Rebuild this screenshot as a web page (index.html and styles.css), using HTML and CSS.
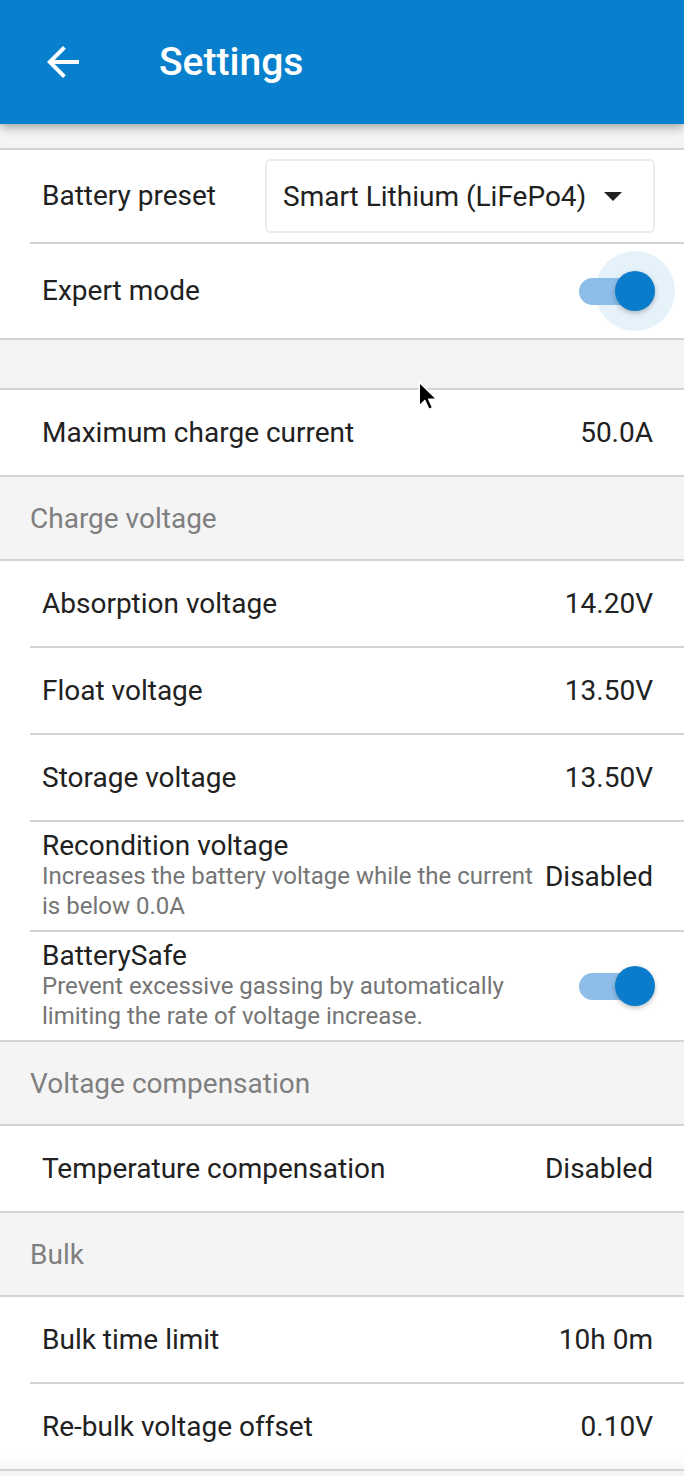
FILE: index.html
```html
<!DOCTYPE html>
<html>
<head>
<meta charset="utf-8">
<link rel="stylesheet" href="styles.css">
</head>
<body>
<div class="app">
  <header class="topbar">
    <svg class="back" viewBox="0 0 24 24" width="48" height="48"><path d="M20 11H7.83l5.59-5.59L12 4l-8 8 8 8 1.41-1.41L7.83 13H20v-2z" fill="#fff"/></svg>
    <h1 class="title">Settings</h1>
  </header>

  <div class="gap small"></div>

  <section class="card">
    <div class="row preset">
      <div class="label">Battery preset</div>
      <div class="select">
        <span>Smart Lithium (LiFePo4)</span>
        <svg class="caret" viewBox="0 0 18 10" width="18" height="10"><path d="M0 0h18L9 9z" fill="#212121"/></svg>
      </div>
    </div>
    <div class="sep"></div>
    <div class="row expert">
      <div class="label">Expert mode</div>
      <div class="toggle halo"><div class="track"></div><div class="thumb"></div></div>
    </div>
  </section>

  <div class="gap"></div>

  <section class="card">
    <div class="row">
      <div class="label">Maximum charge current</div>
      <div class="value">50.0A</div>
    </div>
  </section>

  <div class="heading">Charge voltage</div>

  <section class="card">
    <div class="row">
      <div class="label">Absorption voltage</div>
      <div class="value">14.20V</div>
    </div>
    <div class="sep"></div>
    <div class="row">
      <div class="label">Float voltage</div>
      <div class="value">13.50V</div>
    </div>
    <div class="sep"></div>
    <div class="row">
      <div class="label">Storage voltage</div>
      <div class="value">13.50V</div>
    </div>
    <div class="sep"></div>
    <div class="row tall">
      <div class="text">
        <div class="label">Recondition voltage</div>
        <div class="sub">Increases the battery voltage while the current is below 0.0A</div>
      </div>
      <div class="value">Disabled</div>
    </div>
    <div class="sep"></div>
    <div class="row tall">
      <div class="text">
        <div class="label">BatterySafe</div>
        <div class="sub">Prevent excessive gassing by automatically limiting the rate of voltage increase.</div>
      </div>
      <div class="toggle"><div class="track"></div><div class="thumb"></div></div>
    </div>
  </section>

  <div class="heading">Voltage compensation</div>

  <section class="card">
    <div class="row">
      <div class="label">Temperature compensation</div>
      <div class="value">Disabled</div>
    </div>
  </section>

  <div class="heading">Bulk</div>

  <section class="card last">
    <div class="row">
      <div class="label">Bulk time limit</div>
      <div class="value">10h 0m</div>
    </div>
    <div class="sep"></div>
    <div class="row">
      <div class="label">Re-bulk voltage offset</div>
      <div class="value">0.10V</div>
    </div>
  </section>

  <svg class="cursor" viewBox="0 0 16 24" width="20" height="30"><path d="M1 1v19l4.5-4.3 3.2 7 3-1.4-3.1-6.8H15z" fill="#000" stroke="#fff" stroke-width="1.2" stroke-linejoin="round"/></svg>
</div>
</body>
</html>
```

FILE: styles.css
```css
* { box-sizing: border-box; }
html, body { margin: 0; padding: 0; }
body {
  background: #f4f4f4;
  font-family: Roboto, "Liberation Sans", sans-serif;
  color: #212121;
  width: 684px;
  height: 1476px;
  overflow: hidden;
}
.app { position: relative; }
.topbar {
  height: 124px;
  background: #0880cd;
  display: flex;
  align-items: center;
  padding-left: 39px;
  box-shadow: 0 3px 10px rgba(0,0,0,0.35);
  position: relative;
  z-index: 2;
}
.back { display: block; }
.title {
  margin: 0 0 0 72px;
  color: #fff;
  font-size: 39px;
  font-weight: 500;
}
.gap { height: 48px; }
.gap.small { height: 24px; }
.card {
  background: #fff;
  border-top: 2px solid #d4d4d4;
  border-bottom: 2px solid #d4d4d4;
}
.card.last { box-shadow: inset 0 -16px 16px -14px rgba(0,0,0,0.06); }
.row {
  display: flex;
  align-items: center;
  justify-content: space-between;
  min-height: 85px;
  padding: 0 31px 0 42px;
}
.row.preset { height: 92px; padding-left: 42px; padding-right: 29px; }
.row.expert { min-height: 94px; }
.row.tall { min-height: 108px; padding-top: 8px; padding-bottom: 8px; }
.label { font-size: 28px; line-height: 30px; }
.value { font-size: 28px; white-space: nowrap; }
.text { flex: 1; padding-right: 12px; }
.sub { font-size: 24px; line-height: 30px; color: #757575; }
.sep { height: 2px; background: #d4d4d4; margin-left: 30px; }
.heading {
  height: 82px;
  display: flex;
  align-items: center;
  padding-left: 30px;
  font-size: 28px;
  color: #7f7f7f;
}
.select {
  width: 390px;
  height: 74px;
  border: 2px solid #ececec;
  border-radius: 6px;
  display: flex;
  align-items: center;
  justify-content: space-between;
  padding: 0 31px 0 16px;
  font-size: 28px;
}
.caret { display: block; margin-top: 2px; }
.toggle {
  position: relative;
  width: 76px;
  height: 40px;
  margin-right: -2px;
}
.track {
  position: absolute;
  left: 0;
  top: 7px;
  width: 66px;
  height: 27px;
  border-radius: 14px;
  background: #8dbde8;
}
.thumb {
  position: absolute;
  right: 0;
  top: 0;
  width: 40px;
  height: 40px;
  border-radius: 50%;
  background: #0a7ccb;
  box-shadow: 0 2px 5px rgba(0,0,0,0.25);
}
.toggle.halo::before {
  content: "";
  position: absolute;
  width: 80px;
  height: 80px;
  border-radius: 50%;
  right: -20px;
  top: -20px;
  background: rgba(10,124,203,0.10);
}
.cursor {
  position: absolute;
  left: 418px;
  top: 381px;
  z-index: 5;
}
```
